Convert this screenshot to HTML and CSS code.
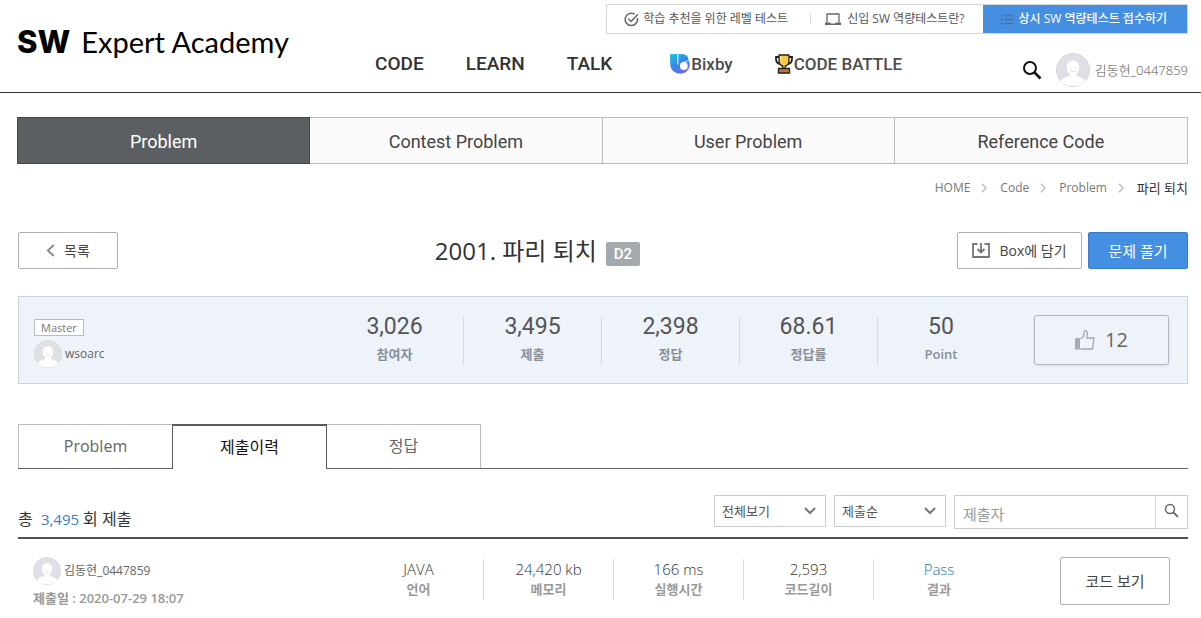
FILE: index.html
```html
<!DOCTYPE html>
<html lang="ko">
<head>
<meta charset="utf-8">
<meta name="viewport" content="width=device-width, initial-scale=1">
<title>SW Expert Academy</title>
<link rel="stylesheet" href="styles.css">
</head>
<body>
<svg class="defs" aria-hidden="true">
  <symbol id="avatar" viewBox="0 0 34 34">
    <circle cx="17" cy="17" r="16.5" fill="#dfe0e6" stroke="#d6d8de"/>
    <path d="M17 7.5c4 0 6.2 2.800 6.200 6.400 0 3-1.200 5.600-3 7v2.100c3.800.8 8 2.400 9 5.500A16 16 0 0 1 17 33 16 16 0 0 1 4.800 28.500c1-3.100 5.200-4.700 9-5.500v-2.100c-1.800-1.400-3-4-3-7 0-3.600 2.200-6.400 6.200-6.400z" fill="#fff"/>
    <path d="M14.300 14v1.500M19.700 14v1.500M14 17.500c1.500 1.800 4.500 1.800 6 0" fill="none" stroke="#dcdee4" stroke-width="1"/>
  </symbol>
  <symbol id="search" viewBox="0 0 20 20">
    <circle cx="8" cy="8" r="6" fill="none" stroke="currentColor" stroke-width="2"/>
    <path d="M12.500 12.500 18.500 18.500" stroke="currentColor" stroke-width="2.600"/>
  </symbol>
  <symbol id="crumb" viewBox="0 0 6 10">
    <path d="M1 .8 5 5 1 9.200" fill="none" stroke="#bbb" stroke-width="1.300"/>
  </symbol>
</svg>

<header class="header">
  <a class="logo" href="#"><b class="logo-mark">SW</b>Expert Academy</a>
  <div class="header-main">
    <div class="utility">
      <a class="utility-link utility-first" href="#">
        <svg width="15" height="15" viewBox="0 0 15 15" fill="none" stroke="#666" stroke-width="1.500"><path d="M13.400 6A6.200 6.200 0 1 1 10.600 2.100"/><path d="M4.300 6.800 7 9.500 14 2.300"/></svg>
        <span>학습 추천을 위한 레벨 테스트</span></a>
      <a class="utility-link utility-second" href="#">
        <svg width="16" height="13" viewBox="0 0 16 13" fill="none"><path d="M2 9.500V1h12v8.500" stroke="#666" stroke-width="1.300"/><path d="M0 9.500h5.500v1h5v-1H16V12H0z" fill="#666"/></svg>
        <span>신입 SW 역량테스트란?</span></a>
      <a class="utility-link utility-apply" href="#">
        <svg width="12" height="11" viewBox="0 0 12 11" stroke="#56718f" stroke-width="1.600"><path d="M0 1.500h2M4 1.500h8M0 5.500h2M4 5.500h8M0 9.500h2M4 9.500h8"/></svg>
        <span>상시 SW 역량테스트 접수하기</span></a>
    </div>
    <div class="header-row">
      <nav class="gnb">
        <a href="#">CODE</a>
        <a href="#">LEARN</a>
        <a href="#">TALK</a>
        <a class="gnb-bixby" href="#">
          <svg width="20" height="20" viewBox="0 0 20 20"><defs><linearGradient id="bx" x1="0" y1="0" x2=".6" y2="1"><stop offset="0" stop-color="#19c7e6"/><stop offset=".5" stop-color="#348be6"/><stop offset="1" stop-color="#6c6be4"/></linearGradient></defs><path d="M0 1Q0 0 1 0H11C16 0 18.500 2.500 18.500 6 19.500 8 20 9.500 19.700 11.500 19 16.500 15 19.700 10.500 19.700 4.500 19.700.3 15.500.2 10z" fill="url(#bx)"/><path d="M7.800 0V10.500" stroke="#d9f0fb" stroke-width="1.200"/><circle cx="13.800" cy="12" r="3.900" fill="#fff"/><path d="M13 8.300c2-.2 4-.8 5.500-2" stroke="#fff" fill="none" stroke-width=".8"/></svg>Bixby</a>
        <a class="gnb-battle" href="#">
          <svg width="18" height="20" viewBox="0 0 18 20" stroke="#222" stroke-width="1.300"><path d="M4 3H1v2c0 3 1.500 4.500 4 5M14 3h3v2c0 3-1.500 4.500-4 5" fill="none" stroke-width="1.800"/><path d="M4 1h10v5.500c0 2.800-1.500 5-3.700 5.500v2.500H7.700V12C5.500 11.500 4 9.300 4 6.500z" fill="#f6c944"/><path d="M3.500 14.500h11V19h-11z" fill="#c9712f"/><path d="M6 2.500v4" stroke="#fff0a8"/></svg>CODE BATTLE</a>
      </nav>
      <div class="account">
        <button class="icon-button" type="button" aria-label="검색"><svg width="20" height="20"><use href="#search"/></svg></button>
        <a class="account-user" href="#"><svg width="34" height="34"><use href="#avatar"/></svg>김동현_0447859</a>
      </div>
    </div>
  </div>
</header>

<main class="content">
  <nav class="section-tabs">
    <a class="is-active" href="#">Problem</a>
    <a href="#">Contest Problem</a>
    <a href="#">User Problem</a>
    <a href="#">Reference Code</a>
  </nav>

  <nav class="breadcrumb" aria-label="breadcrumb">
    <a href="#">HOME</a><svg width="6" height="10"><use href="#crumb"/></svg>
    <a href="#">Code</a><svg width="6" height="10"><use href="#crumb"/></svg>
    <a href="#">Problem</a><svg width="6" height="10"><use href="#crumb"/></svg>
    <span class="breadcrumb-current">파리 퇴치</span>
  </nav>

  <div class="title-row">
    <button class="button button-list" type="button"><svg width="9" height="13" viewBox="0 0 9 13" fill="none" stroke="#888" stroke-width="1.800"><path d="M7.800 1 1.800 6.500l6 5.500"/></svg>목록</button>
    <div class="title-box"><h1 class="title">2001. 파리 퇴치</h1><span class="level">D2</span></div>
    <div class="title-actions">
      <button class="button button-box" type="button"><svg width="18" height="15" viewBox="0 0 18 15" fill="none" stroke="#777" stroke-width="1.800"><path d="M5.500 1H1v13h16V1h-4.500M9 0v9M5.500 6 9 9.500 12.500 6"/></svg>Box에 담기</button>
      <button class="button button-primary" type="button">문제 풀기</button>
    </div>
  </div>

  <section class="summary">
    <div class="author">
      <span class="badge">Master</span>
      <a class="user" href="#"><svg width="28" height="28"><use href="#avatar"/></svg>wsoarc</a>
    </div>
    <dl class="stats">
      <div><dd>3,026</dd><dt>참여자</dt></div>
      <div><dd>3,495</dd><dt>제출</dt></div>
      <div><dd>2,398</dd><dt>정답</dt></div>
      <div><dd>68.61</dd><dt>정답률</dt></div>
      <div><dd>50</dd><dt>Point</dt></div>
    </dl>
    <button class="like" type="button"><svg width="20" height="20" viewBox="0 0 20 20"><path d="M0 8h5v11.500H0z" fill="#a9adb1"/><path d="M5.500 9 8.500 6.500 9.500 1c1.500-1 3 .1 2.800 2L11.800 8H19l-1.500 11H5.500" fill="none" stroke="#a4a8ac" stroke-width="1.300"/></svg>12</button>
  </section>

  <nav class="sub-tabs">
    <a href="#">Problem</a>
    <a class="is-active" href="#">제출이력</a>
    <a href="#">정답</a>
  </nav>

  <div class="list-head">
    <p class="total">총 <span>3,495</span>회 제출</p>
    <form class="filters">
      <select class="filter" aria-label="결과 보기"><option>전체보기</option></select>
      <select class="filter" aria-label="정렬"><option>제출순</option></select>
      <div class="search-box">
        <input type="text" placeholder="제출자" aria-label="제출자">
        <button type="button" aria-label="검색"><svg width="15" height="15"><use href="#search"/></svg></button>
      </div>
    </form>
  </div>

  <article class="entry">
    <div class="entry-author">
      <a class="user" href="#"><svg width="28" height="28"><use href="#avatar"/></svg>김동현_0447859</a>
      <p class="entry-date">제출일 : 2020-07-29 18:07</p>
    </div>
    <dl class="metrics">
      <div><dd>JAVA</dd><dt>언어</dt></div>
      <div><dd>24,420 kb</dd><dt>메모리</dt></div>
      <div><dd>166 ms</dd><dt>실행시간</dt></div>
      <div><dd>2,593</dd><dt>코드길이</dt></div>
      <div><dd class="pass">Pass</dd><dt>결과</dt></div>
    </dl>
    <button class="button button-code" type="button">코드 보기</button>
  </article>
</main>
</body>
</html>
```
FILE: styles.css
```css
* { box-sizing: border-box; }

body {
  margin: 0;
  background: #fff;
  color: #555;
  font-family: "Open Sans", "Noto Sans CJK KR", sans-serif;
  font-size: 12px;
  line-height: 20px;
}

a { color: inherit; text-decoration: none; }
p, h1, dl, dd { margin: 0; }
button, input, select { font: inherit; color: inherit; }
button { cursor: pointer; }
svg { flex: none; }
.defs { position: absolute; width: 0; height: 0; }

/* Header */
.header {
  display: flex;
  border-bottom: 1px solid #333;
  padding: 4px 13px 5px 17px;
}

.logo {
  display: flex;
  align-items: baseline;
  width: 358px;
  padding-top: 18px;
  color: #000;
  font: 400 29px/40px Lato, sans-serif;
  white-space: nowrap;
}
.logo-mark {
  margin-right: 11px;
  font: 800 31px/40px Inter, sans-serif;
}

.header-main { flex: 1; }
.utility {
  display: flex;
  width: fit-content;
  margin-left: auto;
  border: 1px solid #d5d8dc;
}
.utility-link {
  display: flex;
  align-items: center;
  height: 28px;
  gap: 4px;
  white-space: nowrap;
}
.utility-first { padding: 0 8px 0 17px; }
.utility-second { padding: 0 18px 0 14px; gap: 6px; }
.utility-second::before {
  content: "";
  width: 1px;
  height: 10px;
  margin-right: 8px;
  background: #ddd;
}
.utility-apply {
  gap: 6px;
  padding: 0 20px 0 18px;
  background: #458fe2;
  color: #fff;
  font-weight: 500;
}

.header-row {
  display: flex;
  justify-content: space-between;
  align-items: center;
  padding-top: 15px;
}
.gnb {
  display: flex;
  align-items: center;
  gap: 42px;
  padding-bottom: 8px;
  color: #333;
  font: 500 19px/24px Roboto, sans-serif;
}
.gnb-bixby, .gnb-battle {
  display: flex;
  align-items: center;
  gap: 1px;
  color: #4c4c4c;
  font-size: 17px;
}
.gnb-bixby { margin-left: 16px; }
.account { display: flex; align-items: center; gap: 14px; padding-top: 4px; }
.icon-button { display: flex; padding: 0; border: 0; background: none; color: #111; }
.account-user {
  display: flex;
  align-items: center;
  gap: 5px;
  color: #555;
  font-size: 13px;
  font-weight: 300;
}

/* Section tabs */
.content { padding: 24px 13px 0 18px; }
.section-tabs {
  display: grid;
  grid-template-columns: repeat(4, 1fr);
  margin-left: -1px;
  border: 1px solid #bbb;
  background: #fafafa;
  color: #444;
  font: 400 18px/43px Roboto, sans-serif;
  text-align: center;
}
.section-tabs a { padding-top: 2px; border-right: 1px solid #bbb; }
.section-tabs a:last-child { border-right: 0; }
.section-tabs .is-active {
  margin: -1px 0 -1px -1px;
  border: 1px solid #43474a;
  background: #5b5f61;
  color: #fff;
}

.breadcrumb {
  display: flex;
  justify-content: flex-end;
  align-items: center;
  gap: 11px;
  margin-top: 14px;
  color: #777;
}
.breadcrumb svg { margin-right: 2px; }
.breadcrumb-current { color: #333; font-size: 13px; }

/* Problem title */
.title-row { display: flex; align-items: center; margin-top: 34px; }
.button {
  display: flex;
  align-items: center;
  justify-content: center;
  gap: 9px;
  height: 37px;
  padding: 0 13px;
  border: 1px solid #b0b0b0;
  border-radius: 2px;
  background: #fff;
  color: #444;
  font-size: 14px;
}
.button-list { width: 100px; }
.button-box { width: 125px; }
.button-primary { width: 100px; border-color: #3a7dc8; background: #458fe2; color: #fff; font-size: 15px; }
.button-code { width: 110px; height: 48px; font-size: 15px; }
.title-box {
  display: flex;
  flex: 1;
  align-items: center;
  justify-content: center;
  gap: 9px;
}
.title { color: #333; font-size: 24px; font-weight: 400; line-height: 36px; }
.level {
  margin-top: 6px;
  padding: 0 8px;
  border-radius: 2px;
  background: #a3a9ad;
  color: #fff;
  font: 500 15px/24px Roboto, sans-serif;
}
.title-actions { display: flex; gap: 6px; }

/* Problem summary */
.summary {
  display: flex;
  align-items: flex-start;
  margin-top: 27px;
  padding: 18px 18px 15px;
  border: 1px solid #cbd3dc;
  background: #eef3fa;
}
.author { flex: 1; margin-left: -3px; }
.badge {
  display: block;
  width: fit-content;
  margin-top: 4px;
  padding: 0 6px;
  border: 1px solid #b5bcc2;
  background: #fff;
  color: #777;
  font-size: 11px;
  line-height: 15px;
}
.user { display: flex; align-items: center; gap: 3px; width: fit-content; color: #666; }
.author .user { margin-top: 4px; }
.stats, .metrics { display: flex; text-align: center; }
.stats { margin: 2px 30px 0 0; }
.stats div { width: 138px; height: 48px; border-right: 1px solid #d5dae0; }
.stats div:last-child { width: 126px; border: 0; }
.stats dd { color: #555; font: 400 23px/20px Roboto, sans-serif; }
.stats dt { margin-top: 7px; color: #888e96; font-size: 13px; font-weight: 600; line-height: 20px; }
.like {
  display: flex;
  align-items: center;
  justify-content: center;
  gap: 10px;
  width: 135px;
  height: 50px;
  border: 1px solid #adb5c0;
  border-radius: 3px;
  background: #eef3fa;
  box-shadow: 0 1px 3px #dbe0e8;
  color: #666;
  font-size: 20px;
}

/* Submission tabs */
.sub-tabs {
  display: flex;
  margin-top: 40px;
  border-bottom: 1px solid #666;
  color: #666;
  font-size: 16px;
  line-height: 43px;
  text-align: center;
}
.sub-tabs a { width: 154px; border: 1px solid #bbb; border-bottom: 0; border-right: 0; }
.sub-tabs a:last-child { border-left: 0; border-right: 1px solid #bbb; }
.sub-tabs .is-active {
  width: 155px;
  margin-bottom: -1px;
  border: 1px solid #5b5b5b;
  border-top-width: 2px;
  border-bottom: 0;
  background: #fff;
  color: #111;
}

/* Submission list */
.list-head {
  display: flex;
  justify-content: space-between;
  margin-top: 26px;
  padding-bottom: 8px;
  border-bottom: 2px solid #505250;
}
.total { padding-top: 14px; color: #333; font-size: 16px; }
.total span { margin: 0 4px; color: #3a7fc0; font-size: 15px; }
.filters { display: flex; gap: 8px; }
.filter {
  width: 112px;
  height: 32px;
  padding: 0 7px;
  border: 1px solid #ccc;
  border-radius: 0;
  appearance: none;
  background: #fff url("data:image/svg+xml,%3Csvg xmlns='http://www.w3.org/2000/svg' width='12' height='8' fill='none' stroke='%23777' stroke-width='2'%3E%3Cpath d='M1 1l5 5 5-5'/%3E%3C/svg%3E") no-repeat right 9px center;
  color: #555;
  font-size: 13px;
}
.search-box { display: flex; width: 234px; height: 34px; border: 1px solid #ccc; }
.search-box input { flex: 1; min-width: 0; padding: 3px 8px 0; border: 0; font-size: 15px; }
.search-box input::placeholder { color: #999; }
.search-box button {
  display: flex;
  align-items: flex-start;
  justify-content: center;
  width: 32px;
  padding: 7px 0;
  border: 0;
  border-left: 1px solid #ddd;
  background: #fff;
  color: #666;
}

.entry { display: flex; align-items: flex-start; padding: 18px 18px 0 15px; }
.entry-author { flex: 1; }
.entry-date { margin-top: 3px; color: #999; font-size: 13px; font-weight: 600; }
.metrics { margin: 2px 56px 0 0; }
.metrics div { width: 130px; height: 41px; border-right: 1px solid #d8dcdc; }
.metrics div:last-child { border: 0; }
.metrics dd { color: #333; font-size: 15px; font-weight: 300; }
.metrics dt { color: #999; font-size: 13px; font-weight: 600; }
.metrics .pass { color: #2571b0; }
```
